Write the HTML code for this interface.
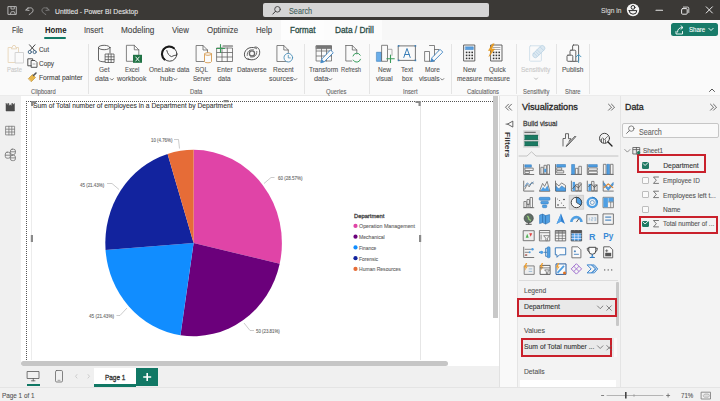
<!DOCTYPE html>
<html><head><meta charset="utf-8">
<style>
*{margin:0;padding:0;box-sizing:border-box}
html,body{width:720px;height:401px;overflow:hidden;background:#fff;font-family:"Liberation Sans",sans-serif;color:#333}
.a{position:absolute}
.t{position:absolute;white-space:nowrap;line-height:1;transform-origin:0 0}
#titlebar{left:0;top:0;width:720px;height:19.5px;background:#3b3936}
#tabs{left:0;top:19.5px;width:720px;height:20.5px;background:#f7f7f7}
#ribbon{left:0;top:40px;width:720px;height:56px;background:#fafafa;border-bottom:1px solid #ebebeb}
#sidebar{left:0;top:96px;width:21px;height:270px;background:#f0f0f0}
#canvas{left:21px;top:96px;width:479px;height:270px;background:#fff}
#pagebar{left:0;top:366px;width:500px;height:21px;background:#f0f0f0}
#status{left:0;top:387px;width:720px;height:14px;background:#f1f1f1;border-top:1px solid #e4e4e4}
#filters{left:499px;top:96px;width:18px;height:291px;background:#f9f9f9;border-left:1px solid #e1e1e1}
#viz{left:517px;top:96px;width:103px;height:291px;background:#f3f3f3;border-left:1px solid #e4e4e4}
#data{left:620px;top:96px;width:100px;height:291px;background:#f3f3f3;border-left:1px solid #e4e4e4}
.sep{position:absolute;top:44px;width:1px;height:49.5px;background:#e4e4e4}
.chk{position:absolute;width:6.5px;height:6.5px;border:1px solid #bdbdbd;background:#fafafa;border-radius:1px}
.chk.on{background:#217a63;border-color:#217a63}
.rbox{position:absolute;border:2px solid #c9202b}
</style></head><body>
<div id="titlebar" class="a"></div>
<div id="tabs" class="a"></div>
<div id="ribbon" class="a"></div>
<div id="sidebar" class="a"></div>
<div id="canvas" class="a"></div>
<div id="pagebar" class="a"></div>
<div id="status" class="a"></div>
<div id="filters" class="a"></div>
<div id="viz" class="a"></div>
<div id="data" class="a"></div>

<!-- search box -->
<div class="a" style="left:263px;top:3px;width:226px;height:14px;background:#d5d5d5;border-radius:2px"></div>
<!-- tab highlights -->
<div class="a" style="left:281px;top:20px;width:43px;height:20px;background:#fdfdfd"></div>
<div class="a" style="left:324px;top:20px;width:58px;height:20px;background:#fcfcfc"></div>
<div class="a" style="left:44.3px;top:36.5px;width:21.8px;height:2.2px;background:#117865;border-radius:1px"></div>
<div class="a" style="left:671.2px;top:22.5px;width:46.6px;height:13.7px;background:#177a68;border-radius:2.5px"></div>
<!-- separators -->
<div class="sep" style="left:88px"></div>
<div class="sep" style="left:303.7px"></div>
<div class="sep" style="left:369px"></div>
<div class="sep" style="left:451px"></div>
<div class="sep" style="left:516px"></div>
<div class="sep" style="left:556.4px"></div>
<div class="sep" style="left:588.6px"></div>

<svg class="a" style="left:0;top:0" width="720" height="40" fill="none" stroke-linejoin="round" stroke-linecap="round">
<path d="M8.3,6.6 h8 v7.8 h-8 z" stroke="#b5b5b5" stroke-width="1"/>
<path d="M11,6.8 v2.2 h3.3 v-2.2" stroke="#b5b5b5" stroke-width="0.9"/>
<path d="M10.3,14.3 l1,-2.6 h3 l1,2.6" stroke="#b5b5b5" stroke-width="0.9"/>
<path d="M26,10 l2.2,-2.6 M26,10 l3,0.4" stroke="#b8b8b8" stroke-width="1"/>
<path d="M26.3,9.8 C29,6.5 33.5,7.5 33,10.8 C32.7,12.3 31,13.5 29.2,14.5" stroke="#b8b8b8" stroke-width="1"/>
<path d="M49,10 l-2.2,-2.6 M49,10 l-3,0.4" stroke="#7d7d7d" stroke-width="1"/>
<path d="M48.7,9.8 C46,6.5 41.5,7.5 42,10.8 C42.3,12.3 44,13.5 45.8,14.5" stroke="#7d7d7d" stroke-width="1"/>
<circle cx="277.5" cy="9.3" r="2.8" stroke="#3d3d3d" stroke-width="0.9"/>
<path d="M275.5,11.3 l-2.7,2.8" stroke="#3d3d3d" stroke-width="1"/>
<circle cx="633" cy="10" r="6.2" fill="#f4f4f4" stroke="none"/>
<circle cx="633" cy="7.4" r="1.9" stroke="#2a2a2a" stroke-width="1"/>
<path d="M629.2,10.6 h7.6 a3.8,3.6 0 0 1 -7.6,0 z" stroke="#2a2a2a" stroke-width="1" fill="#f4f4f4"/>
<path d="M656,10.3 h6.5" stroke="#e8e8e8" stroke-width="1.1"/>
<rect x="681.6" y="8.6" width="5.6" height="5.6" rx="1" stroke="#e8e8e8" stroke-width="1"/>
<path d="M683.4,7.1 h4.2 a1.2,1.2 0 0 1 1.2,1.2 v4.2" stroke="#e8e8e8" stroke-width="0.9"/>
<path d="M706.2,6.8 l6.2,6.2 M712.4,6.8 l-6.2,6.2" stroke="#ececec" stroke-width="1"/>
<path d="M676,31.5 v2.5 h6.5 v-2.5" stroke="#fff" stroke-width="0.9"/>
<path d="M677.5,32 c0,-3 2,-4.5 5,-4.5 M681,25.8 l2,1.7 l-2,1.7" stroke="#fff" stroke-width="0.9"/>
<path d="M708.8,28.3 l2.2,2.2 l2.2,-2.2" stroke="#fff" stroke-width="0.9"/>
</svg>
<!-- ===== RIBBON ICONS ===== -->
<svg class="a" style="left:0;top:0" width="720" height="100" fill="none" stroke-linejoin="round" stroke-linecap="round">
<!-- paste (faded) -->
<path d="M8.5,47.5 h10 v15 h-10 z" stroke="#ead9bf" stroke-width="1"/>
<path d="M11.5,48.5 l1.5,-3 h2 l1.5,3 z" stroke="#e6d3b6" stroke-width="0.9" fill="#fafafa"/>
<path d="M15.5,52.5 h8 v10.5 h-8 z" stroke="#d3d3d3" stroke-width="1" fill="#fafafa"/>
<!-- cut -->
<path d="M29.5,44.8 L34.5,50.5 M35,44.8 L30,50.5" stroke="#444" stroke-width="1"/>
<circle cx="29.8" cy="52" r="1.6" stroke="#4a6d8a" stroke-width="1"/>
<circle cx="34.6" cy="52" r="1.6" stroke="#4a6d8a" stroke-width="1"/>
<!-- copy -->
<path d="M28.2,58.8 h4.5 v7 h-4.5 z" stroke="#444" stroke-width="0.9"/>
<path d="M31.5,60.5 h3.5 l2,2 v4.8 h-5.5 z" stroke="#444" stroke-width="0.9" fill="#fafafa"/>
<path d="M33,64 h2" stroke="#777" stroke-width="0.6"/>
<!-- format painter -->
<path d="M28.5,78.5 l4,-4 l3,3 l-4,4 z" fill="#e8b64a" stroke="#b98a2a" stroke-width="0.6"/>
<path d="M33.5,75.5 l2.5,-2.5" stroke="#555" stroke-width="1.6"/>
<!-- get data -->
<path d="M98.5,47.5 v12.5 a5.5,2 0 0 0 6.5,1.8" stroke="#555" stroke-width="0.9"/>
<path d="M110,47.5 v5.5" stroke="#555" stroke-width="0.9"/>
<ellipse cx="104.2" cy="47.5" rx="5.7" ry="2.2" stroke="#555" stroke-width="0.9"/>
<path d="M105.5,54 h8.5 v8.5 h-8.5 z M105.5,56.8 h8.5 M105.5,59.6 h8.5 M108.3,54 v8.5 M111.1,54 v8.5" stroke="#555" stroke-width="0.8" fill="#fafafa"/>
<!-- excel -->
<path d="M126.8,45.3 h7.5 l4.5,4.5 v11.5 h-12 z" stroke="#666" stroke-width="0.8"/>
<path d="M134.3,45.3 v4.5 h4.5" stroke="#666" stroke-width="0.8"/>
<rect x="133" y="54.8" width="9" height="8" fill="#1f7244" stroke="none"/>
<path d="M135.8,57 l3.4,4 M139.2,57 l-3.4,4" stroke="#fff" stroke-width="0.9"/>
<!-- onelake -->
<circle cx="169.7" cy="54" r="7.2" stroke="#333" stroke-width="0.9"/>
<path d="M164.5,59.5 A7.2,7.2 0 0 1 174,48.2" stroke="#1a1a1a" stroke-width="2"/>
<path d="M166.8,50.5 Q168,55.5 171.5,56.6 Q174,55.2 176.8,55" stroke="#333" stroke-width="0.9"/>
<!-- sql server -->
<path d="M196.5,45.5 h6.5 l4.5,4.5 v11.5 h-11 z" stroke="#666" stroke-width="0.8"/>
<path d="M203,45.5 v4.5 h4.5" stroke="#666" stroke-width="0.8"/>
<path d="M204.5,54 v7.5 a3.5,1.3 0 0 0 7,0 v-7.5" stroke="#d69a4e" stroke-width="0.9" fill="#fafafa"/>
<ellipse cx="208" cy="54" rx="3.5" ry="1.3" stroke="#d69a4e" stroke-width="0.9" fill="#fafafa"/>
<!-- enter data -->
<path d="M217,48 h15.5 v13.5 h-15.5 z M217,52.5 h15.5 M217,57 h15.5 M222,48 v13.5 M227.3,48 v13.5" stroke="#666" stroke-width="0.8"/>
<path d="M223,46 h9.5" stroke="#555" stroke-width="1.2"/>
<path d="M220.5,44.5 v8 M216.5,48.5 h8" stroke="#3a9a5a" stroke-width="1.1"/>
<!-- dataverse -->
<path d="M249.5,59.6 C243,60 242.5,50.5 249,48 C252,47 255,47.5 256.5,48.6" stroke="#555" stroke-width="1"/>
<path d="M255,47 C261,46.5 261.5,56 255.5,59 C252.5,60.3 249.5,60 247.8,58.6" stroke="#555" stroke-width="1"/>
<circle cx="252" cy="53.4" r="2.6" stroke="#666" stroke-width="1.3"/>
<path d="M247.2,55.5 C247,51 250,49.3 253.5,49.8 M256.8,51.4 C257,56 254,57.5 250.5,57" stroke="#666" stroke-width="0.9"/>
<!-- recent sources -->
<path d="M277.3,45.5 h6.5 l4.5,4.5 v11.5 h-11 z" stroke="#666" stroke-width="0.8"/>
<path d="M283.8,45.5 v4.5 h4.5" stroke="#666" stroke-width="0.8"/>
<circle cx="288.3" cy="57.7" r="4.3" stroke="#4a8fb8" stroke-width="0.9" fill="#fafafa"/>
<path d="M288.3,55.3 v2.6 h2" stroke="#4a8fb8" stroke-width="0.8"/>
<!-- transform data -->
<path d="M316.5,45.8 h15 v15.2 h-15 z M316.5,51 h15 M316.5,56 h15 M321.5,48.5 v12.5 M326.5,48.5 v12.5" stroke="#6a6a6a" stroke-width="0.8"/>
<rect x="316.5" y="45.8" width="15" height="2.9" fill="#777" stroke="#6a6a6a" stroke-width="0.6"/>
<path d="M330.8,50.2 L333.3,52.7 L324.2,61.8 L320.8,62.8 L321.8,59.3 Z" fill="#fafafa" stroke="#3f86c4" stroke-width="0.9"/>
<path d="M320.8,62.8 L321.8,59.3 L324.2,61.8 Z" fill="#3f86c4"/>
<!-- refresh -->
<path d="M345.8,45.5 h6.5 l4.5,4.5 v4 M345.8,45.5 v15.5 h6" stroke="#666" stroke-width="0.8"/>
<path d="M352.3,45.5 v4.5 h4.5" stroke="#666" stroke-width="0.8"/>
<path d="M353,56 a4,4 0 0 1 7.3,-0.8 M360.5,59.3 a4,4 0 0 1 -7.3,0.8" stroke="#3aa060" stroke-width="1"/>
<!-- new visual -->
<path d="M376.8,52.3 h4.6 v9 h-4.6 z" fill="#6aaeea" stroke="#3a7fc0" stroke-width="0.7"/>
<path d="M382,45.3 h5.5 v16 h-5.5 z" stroke="#666" stroke-width="0.8"/>
<path d="M387.5,49.3 h4.5 v6" stroke="#999" stroke-width="0.8"/>
<path d="M390.5,55 v7.5 M386.8,58.8 h7.5" stroke="#3a9a5a" stroke-width="1.1"/>
<!-- text box -->
<path d="M398.6,45.9 h16.8 v14.5 h-16.8 z" stroke="#555" stroke-width="0.8"/>
<g fill="#3b7fb8" stroke="none"><rect x="397.8" y="45.1" width="1.6" height="1.6"/><rect x="414.6" y="45.1" width="1.6" height="1.6"/><rect x="397.8" y="59.6" width="1.6" height="1.6"/><rect x="414.6" y="59.6" width="1.6" height="1.6"/></g>
<path d="M403.8,57.5 l3.2,-9 l3.2,9 M404.9,54.5 h4.2" stroke="#3b7fb8" stroke-width="1"/>
<!-- more visuals -->
<path d="M425,51.5 h4.5 v9.8 h-4.5 z M429.5,45.5 h5 v15.8 h-5 M434.5,49.5 h4.5 v3.5" stroke="#666" stroke-width="0.8"/>
<path d="M440.3,49.6 L442.8,52.1 L434.2,60.7 L430.8,61.7 L431.8,58.2 Z" fill="#fafafa" stroke="#3f86c4" stroke-width="0.9"/>
<path d="M430.8,61.7 L431.8,58.2 L434.2,60.7 Z" fill="#3f86c4"/>
<!-- new measure -->
<path d="M464,45 h10.8 v16 h-10.8 z" stroke="#555" stroke-width="0.9"/>
<rect x="465.5" y="46.8" width="7.8" height="2.8" fill="#5aa0e0" stroke="#3a7fc0" stroke-width="0.5"/>
<g fill="#333" stroke="none">
<rect x="465.8" y="51.6" width="1.6" height="1.6"/><rect x="468.6" y="51.6" width="1.6" height="1.6"/><rect x="471.4" y="51.6" width="1.6" height="1.6"/>
<rect x="465.8" y="54.6" width="1.6" height="1.6"/><rect x="468.6" y="54.6" width="1.6" height="1.6"/><rect x="471.4" y="54.6" width="1.6" height="1.6"/>
<rect x="465.8" y="57.6" width="1.6" height="1.6"/><rect x="468.6" y="57.6" width="1.6" height="1.6"/><rect x="471.4" y="57.6" width="1.6" height="1.6"/>
</g>
<!-- quick measure -->
<path d="M491,45 h11 v16 h-11 z" stroke="#555" stroke-width="0.9"/>
<path d="M493,47.5 h7 M493,49.5 h7" stroke="#888" stroke-width="0.7"/>
<g fill="#333" stroke="none">
<rect x="492.8" y="51.6" width="1.6" height="1.6"/><rect x="495.6" y="51.6" width="1.6" height="1.6"/><rect x="498.4" y="51.6" width="1.6" height="1.6"/>
<rect x="492.8" y="54.6" width="1.6" height="1.6"/><rect x="495.6" y="54.6" width="1.6" height="1.6"/><rect x="498.4" y="54.6" width="1.6" height="1.6"/>
<rect x="492.8" y="57.6" width="1.6" height="1.6"/><rect x="495.6" y="57.6" width="1.6" height="1.6"/><rect x="498.4" y="57.6" width="1.6" height="1.6"/>
</g>
<path d="M492.5,44 l-4,6.5 h3 l-2.5,6 l5.5,-7.5 h-3 l2.5,-5 z" fill="#f0a020" stroke="#d88a10" stroke-width="0.5"/>
<!-- sensitivity faded -->
<rect x="529.6" y="45.8" width="11.8" height="15.4" rx="0.8" stroke="#cfdfea" stroke-width="0.9"/>
<g transform="translate(538.8,51.6) rotate(-45)">
<rect x="-7.5" y="-2.6" width="15" height="5.2" rx="2.6" fill="#dbe8f1" stroke="#bcd3e4" stroke-width="0.8"/>
<path d="M-4.5,-2.4 v4.8 M-2.2,-2.4 v4.8 M0.1,-2.4 v4.8 M4.2,-2.4 v4.8" stroke="#bcd3e4" stroke-width="0.7"/>
</g>
<!-- publish -->
<rect x="572.6" y="45" width="6" height="16.3" rx="1" fill="#fafafa" stroke="#555" stroke-width="0.9"/>
<rect x="570" y="50.2" width="5.8" height="11.1" rx="1" fill="#fafafa" stroke="#555" stroke-width="0.9"/>
<rect x="567" y="55.2" width="5.8" height="6.1" rx="1" fill="#fafafa" stroke="#555" stroke-width="0.9"/>
<path d="M578.6,62.5 v-8 M576.2,56.8 l2.4,-2.4 l2.4,2.4" stroke="#3f8fb8" stroke-width="0.9"/>
<!-- collapse caret -->
<path d="M709.5,91.5 l2.5,-2.5 l2.5,2.5" stroke="#444" stroke-width="0.9"/>
<!-- chevrons -->
<path d="M110.3,78.6 l1.5,1.5 l1.5,-1.5 M173.8,78.6 l1.5,1.5 l1.5,-1.5 M293.8,78.6 l1.5,1.5 l1.5,-1.5 M328.8,78.6 l1.5,1.5 l1.5,-1.5 M440.8,78.6 l1.5,1.5 l1.5,-1.5" stroke="#555" stroke-width="0.8"/>
<path d="M534.5,78 l1.5,1.5 l1.5,-1.5" stroke="#aaa" stroke-width="0.8"/>
</svg>

<!-- ===== CANVAS ===== -->
<div class="a" style="left:26px;top:100.5px;width:467px;height:1px;border-top:1px dotted #555"></div>
<div class="a" style="left:26px;top:101px;width:1px;height:259px;border-left:1px dotted #555"></div>
<div class="a" style="left:31px;top:101px;width:1px;height:259px;background:#ececec"></div>
<div class="a" style="left:420px;top:101px;width:1px;height:259px;background:#e6e6e6"></div>
<div class="a" style="left:21px;top:361px;width:427px;height:5px;background:#c6c6c6;border-radius:3px"></div>
<div class="a" style="left:493px;top:96px;width:5px;height:222px;background:#c8c8c8"></div>

<svg class="a" style="left:0;top:0" width="720" height="401">
<path d="M193.6,243.0 L193.60,149.80 A88.3,93.2 0 0 1 279.69,263.74 Z" fill="#E044A7"/>
<path d="M193.6,243.0 L279.69,263.74 A88.3,93.2 0 0 1 180.44,335.16 Z" fill="#6B007B"/>
<path d="M193.6,243.0 L180.44,335.16 A88.3,93.2 0 0 1 105.55,249.96 Z" fill="#118DFF"/>
<path d="M193.6,243.0 L105.55,249.96 A88.3,93.2 0 0 1 167.57,153.94 Z" fill="#12239E"/>
<path d="M193.6,243.0 L167.57,153.94 A88.3,93.2 0 0 1 193.60,149.80 Z" fill="#E66C37"/>
<g fill="none" stroke="#aaa" stroke-width="0.6">
<path d="M174,139.5 L178.5,139.5 L179.5,148.5"/>
<path d="M107,183.5 L112,183.5 L119,189.5"/>
<path d="M264,183.5 L271,177.5 L274.5,177.5"/>
<path d="M116.5,315.5 L120,315.5 L127,308"/>
<path d="M244,323 L250,330.5 L254,330.5"/>
</g>
<circle cx="355.5" cy="225.90" r="2.1" fill="#E044A7"/>
<circle cx="355.5" cy="236.65" r="2.1" fill="#6B007B"/>
<circle cx="355.5" cy="247.40" r="2.1" fill="#118DFF"/>
<circle cx="355.5" cy="258.15" r="2.1" fill="#12239E"/>
<circle cx="355.5" cy="268.90" r="2.1" fill="#E66C37"/>
</svg>

<!-- ===== PAGE BAR ===== -->
<div class="a" style="left:94px;top:368px;width:42px;height:19px;background:#fff;border-bottom:3px solid #117865"></div>
<div class="a" style="left:136px;top:368px;width:22.3px;height:18px;background:#117865"></div>
<div class="a" style="left:27px;top:384px;width:13px;height:1.5px;background:#117865"></div>

<!-- ===== VIZ PANE ===== -->
<div class="a" style="left:522.8px;top:129.8px;width:17.2px;height:18.7px;background:#dedede;border-radius:1px"></div>
<div class="a" style="left:519px;top:280px;width:99px;height:1px;background:#dcdcdc"></div>
<div class="a" style="left:616px;top:282px;width:2.5px;height:44px;background:#c8c8c8;border-radius:1px"></div>
<div class="a" style="left:517px;top:298px;width:99px;height:19px;background:#e9e9e9"></div>
<div class="rbox" style="left:516.6px;top:297.6px;width:100.4px;height:19.7px"></div>
<div class="a" style="left:520.5px;top:338px;width:94px;height:19px;background:#e9e9e9"></div>
<div class="a" style="left:614.4px;top:338px;width:2.6px;height:19px;background:#fafafa"></div>
<div class="rbox" style="left:520.5px;top:337.7px;width:91.3px;height:19.3px"></div>
<div class="a" style="left:520px;top:380px;width:96px;height:7px;background:#fff"></div>

<!-- ===== DATA PANE ===== -->
<div class="a" style="left:622.3px;top:123px;width:96.4px;height:15px;background:#f9f9f9;border:1px solid #c6c6c6;border-radius:2px"></div>
<div class="chk on" style="left:642px;top:162px"></div>
<div class="chk" style="left:642px;top:177px"></div>
<div class="chk" style="left:642px;top:191px"></div>
<div class="chk" style="left:642px;top:206px"></div>
<div class="chk on" style="left:642px;top:220.5px"></div>
<div class="rbox" style="left:637.4px;top:154.4px;width:68.6px;height:18.6px"></div>
<div class="rbox" style="left:639.2px;top:216.3px;width:79.3px;height:17.3px"></div>

<svg class="a" style="left:0;top:0" width="720" height="401" stroke-linejoin="round">
<g transform="translate(522.70,163.30)"><path d="M1,0.8 V11.2 H11.5" stroke="#6b6b6b" stroke-width="0.9" fill="none"/><rect x="2.2" y="1.5" width="6.5" height="2.4" fill="#4f9fe3" stroke="#2c72b5" stroke-width="0.5"/><rect x="2.2" y="4.8" width="8.3" height="2.4" fill="none" stroke="#6b6b6b" stroke-width="0.8"/><rect x="2.2" y="8" width="4.5" height="2.2" fill="none" stroke="#6b6b6b" stroke-width="0.8"/></g>
<g transform="translate(538.60,163.30)"><path d="M1,0.8 V11.2 H11.5" stroke="#6b6b6b" stroke-width="0.9" fill="none"/><rect x="2.3" y="4" width="2.4" height="6.8" fill="none" stroke="#6b6b6b" stroke-width="0.8"/><rect x="5.4" y="2" width="2.4" height="8.8" fill="none" stroke="#6b6b6b" stroke-width="0.8"/><rect x="5.6" y="5.5" width="2" height="3.5" fill="#4f9fe3"/><rect x="8.6" y="1.5" width="2.3" height="9.3" fill="none" stroke="#6b6b6b" stroke-width="0.8"/></g>
<g transform="translate(554.50,163.30)"><path d="M1,0.8 V11.2 H11.5" stroke="#6b6b6b" stroke-width="0.9" fill="none"/><rect x="2.2" y="1.2" width="8.8" height="2.6" fill="#4f9fe3" stroke="#2c72b5" stroke-width="0.5"/><rect x="2.2" y="4.5" width="5" height="2.2" fill="none" stroke="#6b6b6b" stroke-width="0.8"/><rect x="2.2" y="7.4" width="7" height="2.2" fill="none" stroke="#6b6b6b" stroke-width="0.8"/></g>
<g transform="translate(570.40,163.30)"><path d="M0.5,11.2 H11.5" stroke="#6b6b6b" stroke-width="0.9"/><rect x="1.2" y="1.2" width="3" height="9.8" fill="#4f9fe3" stroke="#2c72b5" stroke-width="0.5"/><rect x="5" y="5" width="2.6" height="6" fill="none" stroke="#6b6b6b" stroke-width="0.8"/><rect x="8.4" y="3" width="2.6" height="8" fill="none" stroke="#6b6b6b" stroke-width="0.8"/></g>
<g transform="translate(586.30,163.30)"><path d="M1,0.8 V11.2 H11.5" stroke="#6b6b6b" stroke-width="0.9" fill="none"/><rect x="2.2" y="1.3" width="8.8" height="2.4" fill="#4f9fe3" stroke="#2c72b5" stroke-width="0.5"/><rect x="2.2" y="4.6" width="8.8" height="2.4" fill="none" stroke="#6b6b6b" stroke-width="0.8"/><rect x="2.2" y="7.9" width="8.8" height="2.4" fill="none" stroke="#6b6b6b" stroke-width="0.8"/></g>
<g transform="translate(602.20,163.30)"><path d="M0.5,11.2 H11.5" stroke="#6b6b6b" stroke-width="0.9"/><rect x="1.2" y="1" width="2.6" height="10" fill="none" stroke="#6b6b6b" stroke-width="0.8"/><rect x="4.7" y="1" width="2.6" height="10" fill="#4f9fe3" stroke="#2c72b5" stroke-width="0.5"/><rect x="8.2" y="1" width="2.6" height="10" fill="none" stroke="#6b6b6b" stroke-width="0.8"/></g>
<g transform="translate(522.70,179.90)"><path d="M1,0.8 V11.2 H11.5" stroke="#6b6b6b" stroke-width="0.9" fill="none"/><path d="M2,9.5 L4.5,4.5 L6.5,7 L9,2.5 L11,4" stroke="#6b6b6b" stroke-width="0.8" fill="none"/><path d="M2,7 L4.5,3 L7,5 L9,3.5 L11,2" stroke="#2c72b5" stroke-width="0.7" fill="none"/></g>
<g transform="translate(538.60,179.90)"><path d="M0.5,11.2 H11.5" stroke="#6b6b6b" stroke-width="0.9"/><path d="M1,11 L4,3.5 L6,6.5 L8.5,1.5 L11.2,11 Z" fill="none" stroke="#6b6b6b" stroke-width="0.8"/><path d="M1.6,11 L4.5,7 L6.5,9 L8.8,5.5 L10.8,11 Z" fill="#4f9fe3"/></g>
<g transform="translate(554.50,179.90)"><path d="M1,0.8 V11.2 H11.5" stroke="#6b6b6b" stroke-width="0.9" fill="none"/><path d="M1.5,3.5 L4.5,6 L7,3 L11,5.5 V11 H1.5 Z" fill="none" stroke="#6b6b6b" stroke-width="0.8"/><path d="M1.5,6.5 L4.5,9 L7,6 L11,8.5 V11 H1.5 Z" fill="#4f9fe3" stroke="#2c72b5" stroke-width="0.5"/></g>
<g transform="translate(570.40,179.90)"><path d="M1,0.8 V11.2 H11.5" stroke="#6b6b6b" stroke-width="0.9" fill="none"/><rect x="2.2" y="2" width="2.4" height="9" fill="#4f9fe3"/><rect x="5.3" y="4.5" width="2.4" height="6.5" fill="none" stroke="#6b6b6b" stroke-width="0.8"/><rect x="8.4" y="3" width="2.4" height="8" fill="none" stroke="#6b6b6b" stroke-width="0.8"/><path d="M2,9 L5,5.5 L8,8 L11,4" stroke="#444" stroke-width="0.7" fill="none"/></g>
<g transform="translate(586.30,179.90)"><path d="M1,0.8 V11.2 H11.5" stroke="#6b6b6b" stroke-width="0.9" fill="none"/><rect x="2.2" y="4" width="2.4" height="7" fill="#4f9fe3"/><rect x="5.3" y="1.5" width="2.4" height="9.5" fill="none" stroke="#6b6b6b" stroke-width="0.8"/><rect x="8.4" y="5" width="2.4" height="6" fill="none" stroke="#6b6b6b" stroke-width="0.8"/><path d="M2,7 L5,4 L8,7.5 L11,5" stroke="#444" stroke-width="0.7" fill="none"/></g>
<g transform="translate(602.20,179.90)"><path d="M1,0.8 V11.2 H11.5" stroke="#6b6b6b" stroke-width="0.9" fill="none"/><path d="M1.5,2.5 L6,8 L11,2.5 V5 L6,10.5 L1.5,5 Z" fill="#4f9fe3" stroke="#2c72b5" stroke-width="0.5"/><path d="M1.5,8 L6,4 L11,8" stroke="#d9822b" stroke-width="1.2" fill="none"/></g>
<g transform="translate(522.70,196.50)"><path d="M0.5,11.2 H11.5" stroke="#6b6b6b" stroke-width="0.9"/><rect x="1.2" y="5" width="2.4" height="6" fill="none" stroke="#6b6b6b" stroke-width="0.8"/><rect x="4.3" y="3" width="2.4" height="5" fill="none" stroke="#6b6b6b" stroke-width="0.8"/><rect x="7.4" y="1" width="2.4" height="10" fill="none" stroke="#6b6b6b" stroke-width="0.8"/><rect x="4.5" y="7" width="2" height="4" fill="#6b6b6b" opacity="0.5"/></g>
<g transform="translate(538.60,196.50)"><rect x="0.6" y="0.8" width="10.8" height="3" rx="1" fill="#4f9fe3" stroke="#2c72b5" stroke-width="0.5"/><rect x="2.2" y="4.7" width="7.6" height="2.8" rx="1" fill="#4f9fe3" stroke="#2c72b5" stroke-width="0.5"/><rect x="3.8" y="8.4" width="4.4" height="2.8" rx="1" fill="#4f9fe3" stroke="#2c72b5" stroke-width="0.5"/></g>
<g transform="translate(554.50,196.50)"><path d="M1,0.8 V11.2 H11.5" stroke="#6b6b6b" stroke-width="0.9" fill="none"/><g fill="#333"><circle cx="3.5" cy="8.5" r="0.8"/><circle cx="9.5" cy="3" r="0.8"/></g><g fill="#6b6b6b"><circle cx="5" cy="4" r="0.6"/><circle cx="7" cy="6.5" r="0.6"/><circle cx="9" cy="9" r="0.6"/><circle cx="3" cy="2.5" r="0.5"/></g></g>
<g transform="translate(570.40,196.50)"><rect x="-1.2" y="-1.2" width="14.4" height="14" fill="#dcdcdc" stroke="#bdbdbd" stroke-width="0.6"/><circle cx="6" cy="6" r="5.2" fill="#fafafa" stroke="#333" stroke-width="0.9"/><path d="M6,6 V0.8 A5.2,5.2 0 0 1 10.4,8.8 Z" fill="#4f9fe3" stroke="#333" stroke-width="0.7"/></g>
<g transform="translate(586.30,196.50)"><circle cx="6" cy="6" r="4.6" fill="none" stroke="#4f9fe3" stroke-width="2.4"/><path d="M6,0.8 A5.2,5.2 0 0 1 11.2,6" stroke="#2c72b5" stroke-width="0.8" fill="none"/><circle cx="6" cy="6" r="2" fill="none" stroke="#2c72b5" stroke-width="0.6"/></g>
<g transform="translate(602.20,196.50)"><rect x="0.8" y="0.8" width="10.4" height="10.4" fill="none" stroke="#6b6b6b" stroke-width="0.8"/><rect x="1.2" y="1.2" width="4.5" height="9.6" fill="#4f9fe3"/><rect x="6.2" y="1.2" width="5" height="4" fill="#4f9fe3"/><path d="M6,5.5 H11 M8.5,5.5 V11" stroke="#6b6b6b" stroke-width="0.7"/></g>
<g transform="translate(522.70,213.10)"><circle cx="6" cy="5.2" r="4.6" fill="#5f6f66" stroke="#3a3a3a" stroke-width="0.6"/><path d="M4.5,3 q2,1 1.5,3 q2,0.5 1.5,2" stroke="#9ad07a" stroke-width="1.2" fill="none"/><path d="M3,11.2 H9 M6,9.8 V11.2" stroke="#444" stroke-width="0.9"/></g>
<g transform="translate(538.60,213.10)"><path d="M1,2 L4,1 L7,2.5 L11,1.5 V9 L7,11 L4,9.5 L1,10.5 Z" fill="#4f9fe3" stroke="#2c72b5" stroke-width="0.6"/><path d="M4,1 V9.5 M7,2.5 V11" stroke="#2a5f96" stroke-width="0.6"/></g>
<g transform="translate(554.50,213.10)"><path d="M6.5,0.5 L10.5,11 L6.5,8.5 L2,11 Z" fill="#2f7fd0"/><path d="M6.5,0.5 L6.5,8.5 L2,11 Z" fill="#5aa6ea"/></g>
<g transform="translate(570.40,213.10)"><path d="M1,9 A5,5 0 0 1 11,9" stroke="#4f9fe3" stroke-width="2.6" fill="none"/><path d="M6,9 L8.5,5.5" stroke="#333" stroke-width="0.8"/></g>
<g transform="translate(586.30,213.10)"><rect x="0.5" y="1.5" width="11" height="9" fill="#eee" stroke="#6b6b6b" stroke-width="0.9"/><path d="M3,4.5 V7.5 M5,4.5 H6.5 V6 H5 V7.5 H6.5 M8,4.5 H9.5 V7.5 H8 M8,6 H9.5" stroke="#8ab0d0" stroke-width="0.6" fill="none"/></g>
<g transform="translate(602.20,213.10)"><rect x="0.8" y="0.8" width="10.4" height="10.4" fill="none" stroke="#6b6b6b" stroke-width="0.9"/><path d="M3,4 H9 M3,7 H9" stroke="#2c72b5" stroke-width="1"/></g>
<g transform="translate(522.70,229.70)"><rect x="0.5" y="1" width="11" height="10" fill="#eee" stroke="#6b6b6b" stroke-width="0.9"/><path d="M3,8 L4.5,4 L6,8 Z" fill="#4caf50"/><path d="M6.5,3.5 H9.5 L8,7 Z" fill="#e04040"/></g>
<g transform="translate(538.60,229.70)"><rect x="0.8" y="0.8" width="10.4" height="10.4" fill="none" stroke="#6b6b6b" stroke-width="0.9"/><path d="M0.8,3 H11.2" stroke="#6b6b6b" stroke-width="0.8"/><path d="M5,6 H11 L8.8,8.5 V11 H7.2 V8.5 Z" fill="#fafafa" stroke="#6b6b6b" stroke-width="0.8"/><path d="M2.5,5 V10" stroke="#6b6b6b" stroke-width="0.8"/></g>
<g transform="translate(554.50,229.70)"><rect x="0.8" y="0.8" width="10.4" height="10.4" fill="none" stroke="#6b6b6b" stroke-width="0.9"/><path d="M0.8,3.5 H11.2 M0.8,6.2 H11.2 M0.8,8.8 H11.2 M4.2,0.8 V11.2 M7.8,0.8 V11.2" stroke="#6b6b6b" stroke-width="0.7"/><rect x="0.8" y="0.8" width="10.4" height="2.7" fill="#6b6b6b" opacity="0.6"/></g>
<g transform="translate(570.40,229.70)"><rect x="0.8" y="0.8" width="10.4" height="10.4" fill="#4f9fe3" stroke="#555" stroke-width="0.9"/><path d="M0.8,3.5 H11.2 M0.8,6.2 H11.2 M0.8,8.8 H11.2 M4.2,0.8 V11.2 M7.8,0.8 V11.2" stroke="#eef" stroke-width="0.7"/><rect x="0.8" y="0.8" width="10.4" height="2.7" fill="#555"/></g>
<g transform="translate(586.30,229.70)"><text x="6" y="10" font-family="Liberation Sans" font-weight="bold" font-size="9" fill="#3a8ad6" text-anchor="middle">R</text></g>
<g transform="translate(602.20,229.70)"><text x="6" y="9.5" font-family="Liberation Sans" font-weight="bold" font-size="9" fill="#3a8ad6" text-anchor="middle" transform="translate(6,0) scale(0.92,1) translate(-6,0)">Py</text></g>
<g transform="translate(522.70,246.30)"><path d="M1,0.5 V11.2 H11.5" stroke="#6b6b6b" stroke-width="0.9" fill="none"/><path d="M2,3 H9 M2,6 H6.5 M2,9 H4.5" stroke="#6b6b6b" stroke-width="0.8"/><circle cx="9.8" cy="3" r="1.2" fill="#4f9fe3"/><circle cx="7" cy="6" r="1" fill="#4f9fe3"/><path d="M2.5,8.5 h2" stroke="#c0392b" stroke-width="0.8"/></g>
<g transform="translate(538.60,246.30)"><path d="M0.5,6 H4" stroke="#2c72b5" stroke-width="1.3"/><circle cx="3" cy="6" r="1.6" fill="#4f9fe3"/><path d="M5,6 H7 M7,2 V10 M7,2 H9 M7,10 H9 M7,6 H9" stroke="#2c72b5" stroke-width="0.8" fill="none"/><rect x="8.5" y="0.5" width="3" height="11" rx="1.2" fill="#4f9fe3" stroke="#2c72b5" stroke-width="0.5"/></g>
<g transform="translate(554.50,246.30)"><path d="M0.8,1.5 H11.2 V8.5 H5 L2.5,11 V8.5 H0.8 Z" fill="#fafafa" stroke="#2c72b5" stroke-width="0.9"/></g>
<g transform="translate(570.40,246.30)"><path d="M1.5,0.5 H7.5 L10.5,3.5 V11.5 H1.5 Z" fill="#fafafa" stroke="#6b6b6b" stroke-width="0.9"/><path d="M3.5,5 h2 M4.5,4 v2 M3.5,8 H8.5" stroke="#2c72b5" stroke-width="0.8"/></g>
<g transform="translate(586.30,246.30)"><path d="M2.5,1 H9.5 V4.5 A3.5,3.5 0 0 1 2.5,4.5 Z" fill="#fafafa" stroke="#333" stroke-width="0.9"/><path d="M2.5,2 H0.8 Q0.8,5 3,5.5 M9.5,2 H11.2 Q11.2,5 9,5.5" stroke="#333" stroke-width="0.7" fill="none"/><path d="M6,8 V10 M3.5,11.2 H8.5" stroke="#2c72b5" stroke-width="1.2"/><path d="M4,11 L6,9.5 L8,11 Z" fill="#4f9fe3"/></g>
<g transform="translate(602.20,246.30)"><path d="M1.5,0.5 H7.5 L10.5,3.5 V11.5 H1.5 Z" fill="#fafafa" stroke="#555" stroke-width="0.9"/><rect x="3" y="6.5" width="6" height="3.5" fill="#555"/><path d="M4.5,3 v3 M3,4.5 h3" stroke="#555" stroke-width="0.8"/></g>
<g transform="translate(522.70,262.90)"><rect x="1.5" y="3" width="10" height="8.5" fill="#eee" stroke="#6b6b6b" stroke-width="0.8"/><path d="M3.2,0.2 L1,4.5 H3 L1.8,8 L5,3.5 H3.2 L4.5,0.2 Z" fill="#f0a030"/><path d="M6,6 H9.5 M6,8.5 H9.5" stroke="#8ab0d0" stroke-width="0.8"/></g>
<g transform="translate(538.60,262.90)"><rect x="1.5" y="2.5" width="10" height="9" fill="#fafafa" stroke="#555" stroke-width="0.9"/><path d="M3.2,0.2 L1,4.5 H3 L1.8,8 L5,3.5 H3.2 L4.5,0.2 Z" fill="#f0a030"/><path d="M6,7 H11 L9.2,9 V11 H7.8 V9 Z" fill="#fafafa" stroke="#555" stroke-width="0.7"/><path d="M1.5,5 H11.5" stroke="#555" stroke-width="0.7"/></g>
<g transform="translate(554.50,262.90)"><rect x="1.5" y="1" width="10" height="10.5" fill="#fafafa" stroke="#2c5f9e" stroke-width="1"/><path d="M3,10 L9.5,3" stroke="#4f9fe3" stroke-width="1.8"/><path d="M3.5,0 L1.2,4.5 H3.2 L2,8 L5.2,3.5 H3.4 L4.8,0 Z" fill="#f0a030"/><circle cx="10" cy="10" r="1.5" fill="#e07020"/></g>
<g transform="translate(570.40,262.90)"><path d="M6,0.8 L11.2,6 L6,11.2 L0.8,6 Z" fill="none" stroke="#a070d0" stroke-width="1"/><path d="M3.4,3.4 L8.6,8.6 M8.6,3.4 L3.4,8.6" stroke="#a070d0" stroke-width="0.9"/></g>
<g transform="translate(586.30,262.90)"><path d="M0.8,2 H6 L10,6 L6,10 H0.8 L4.8,6 Z" fill="none" stroke="#3a86d0" stroke-width="1"/><path d="M5,2 L9,6 L5,10" stroke="#3a86d0" stroke-width="0.9" fill="none"/><path d="M6,2 H8 L11.5,6 L8,10 H6" stroke="#3a86d0" stroke-width="0.9" fill="none"/></g>
<g transform="translate(602.20,262.90)"><g fill="#555"><circle cx="2.5" cy="7" r="0.7"/><circle cx="6" cy="7" r="0.7"/><circle cx="9.5" cy="7" r="0.7"/></g></g>
</svg>
<svg class="a" style="left:0;top:0" width="720" height="401" fill="none" stroke-linejoin="round" stroke-linecap="round">
<!-- sidebar: report -->
<path d="M6,103.5 v7.5 h8.5 v-7.5 l-1.6,1.6 v-1.6 h-1.2 v2.6 l-1.4,-1.4 l-1.4,1.4 v-2.6 h-1.2 v1.6 z" fill="#4a4a4a" stroke="#4a4a4a" stroke-width="0.5"/>
<!-- sidebar: table -->
<path d="M6,126.3 h8.6 v8.6 h-8.6 z M6,129.2 h8.6 M6,132 h8.6 M8.9,126.3 v8.6 M11.8,126.3 v8.6" stroke="#7a7a7a" stroke-width="0.8"/>
<!-- sidebar: model -->
<g stroke="#7d7d7d" stroke-width="0.9">
<rect x="5.3" y="152.2" width="5" height="6" rx="1.8"/><path d="M5.3,155.2 h5"/>
<rect x="10.4" y="149.2" width="5" height="5.3" rx="1.8"/><path d="M10.4,151.8 h5"/>
<rect x="10.4" y="155.3" width="5" height="5.3" rx="1.8"/><path d="M10.4,157.9 h5"/>
</g>
<!-- canvas handles -->
<g fill="#8a8a8a">
<rect x="31" y="101" width="2.2" height="5"/><rect x="31" y="101" width="5" height="2"/>
<rect x="223.5" y="100" width="5" height="2.2"/>
<rect x="418.5" y="101" width="2.2" height="5"/><rect x="415.5" y="101" width="5" height="2"/>
<rect x="30.8" y="235" width="2.2" height="7"/>
<rect x="419" y="235" width="2.2" height="7"/>
</g>
<!-- filters pane -->
<path d="M508.5,104.2 l-3,3 l3,3 M511.5,104.2 l-3,3 l3,3" stroke="#444" stroke-width="0.8"/>
<path d="M512.5,121.3 l-5,2.8 l5,2.8 z M507.5,124.1 h-1.5" stroke="#444" stroke-width="0.8"/>
<!-- viz pane -->
<path d="M608.5,104.2 l3,3 l-3,3 M611.5,104.2 l3,3 l-3,3" stroke="#444" stroke-width="0.8"/>
<path d="M524.8,132.3 h10.5" stroke="#444" stroke-width="0.9"/>
<rect x="524.5" y="135" width="13.5" height="4.9" fill="#1a7a62"/>
<rect x="524.5" y="141.5" width="13.5" height="4.5" fill="#1a7a62"/>
<path d="M524.5,135.2 h13.5 M524.5,139.7 h13.5 M524.5,141.7 h13.5 M524.5,145.8 h13.5" stroke="#235a4b" stroke-width="0.5" stroke-dasharray="1,0.6"/>
<path d="M563,146 v-7.5 h2.5 v-4.8 h3 v5 h2.5 l-2,2.5" stroke="#444" stroke-width="0.8"/>
<path d="M575.5,137 l-7.5,8 l-1.8,1.5 l1.2,-2.2 l7.5,-8 z" stroke="#333" stroke-width="0.8" fill="#fafafa"/>
<circle cx="604.5" cy="138.3" r="5" stroke="#333" stroke-width="0.9"/>
<path d="M608,142 l4,4" stroke="#222" stroke-width="1.3"/>
<path d="M600.5,140 l2,-2 l2,1.5 l3,-3 M601.5,139.5 v3 M603.5,139 v3.8 M605.5,140 v3" stroke="#444" stroke-width="0.7"/>
<path d="M519,156 h8 l4.5,-4.2 l4.5,4.2 h82" stroke="#bdbdbd" stroke-width="0.9"/>
<!-- field well chevrons / x -->
<path d="M597.5,306 l2.7,2.7 l2.7,-2.7 M606.8,305.8 l4.5,4.5 M611.3,305.8 l-4.5,4.5" stroke="#666" stroke-width="0.8"/>
<path d="M597.5,345.8 l2.7,2.7 l2.7,-2.7 M606.8,345.5 l4.5,4.5 M611.3,345.5 l-4.5,4.5" stroke="#666" stroke-width="0.8"/>
<!-- data pane -->
<path d="M710.5,104.2 l3,3 l-3,3 M713.5,104.2 l3,3 l-3,3" stroke="#444" stroke-width="0.8"/>
<circle cx="631.3" cy="128.6" r="2.7" stroke="#666" stroke-width="0.8"/>
<path d="M629.4,130.6 l-2.8,2.8" stroke="#666" stroke-width="0.9"/>
<path d="M624.8,149.5 l2.6,2.6 l2.6,-2.6" stroke="#777" stroke-width="0.8"/>
<path d="M633.2,147.5 h6.5 v6.5 h-6.5 z M633.2,149.6 h6.5 M636.4,147.5 v6.5" stroke="#555" stroke-width="0.8" fill="#eee"/>
<circle cx="638.6" cy="152.6" r="1.6" fill="#1e7a5f"/>
<path d="M643.3,163.7 l1.8,1.8 l3,-3" stroke="#fff" stroke-width="0.9"/>
<path d="M643.3,222.2 l1.8,1.8 l3,-3" stroke="#fff" stroke-width="0.9"/>
<g stroke="#444" stroke-width="0.7">
<path d="M658.5,177 h-5 l2.8,3.2 l-2.8,3.2 h5"/>
<path d="M658.5,191.2 h-5 l2.8,3.2 l-2.8,3.2 h5"/>
<path d="M658.5,220.5 h-5 l2.8,3.2 l-2.8,3.2 h5"/>
</g>
<!-- page bar -->
<path d="M27.5,371.5 h11.5 v7 h-11.5 z M31.5,380.8 h3.5 M33.25,378.5 v2.3" stroke="#555" stroke-width="0.8"/>
<rect x="55.5" y="370.5" width="7" height="11.5" rx="1.2" stroke="#666" stroke-width="0.8"/>
<path d="M58,380.3 h2" stroke="#666" stroke-width="0.6"/>
<path d="M77,374.5 l-1.5,1.8 l1.5,1.8 M88,374.5 l1.5,1.8 l-1.5,1.8" stroke="#c4c4c4" stroke-width="0.8"/>
<path d="M147.2,373 v8 M143.2,377 h8" stroke="#fff" stroke-width="1.6" stroke-linecap="butt"/>
<!-- status zoom -->
<path d="M601.5,395.5 h2.2 M666.5,395.5 h3.2 M668.1,393.9 v3.2" stroke="#666" stroke-width="0.8"/>
<path d="M607,395.5 h56" stroke="#9a9a9a" stroke-width="0.7"/>
<path d="M634,394.5 v2" stroke="#888" stroke-width="0.6"/>
<rect x="625" y="392" width="1.6" height="6.5" fill="#444" stroke="none"/>
<rect x="701.5" y="392.2" width="9" height="6.8" stroke="#777" stroke-width="0.8"/>
<path d="M703.2,395.6 l1.5,-1.6 h3.6 l1.5,1.6 l-1.5,1.6 h-3.6 z" stroke="#999" stroke-width="0.6" fill="#ddd"/>
</svg>

<div class="t" style="left:511.4px;top:132.3px;font-size:8px;font-weight:bold;color:#333;transform:rotate(90deg) scaleX(1.06)">Filters</div>
<div class="t" style="left:54.70px;top:8.00px;font-size:7.3px;-webkit-text-stroke:0.1px #e6e6e6;color:#e6e6e6;transform:scaleX(0.927);">Untitled - Power BI Desktop</div>
<div class="t" style="left:288.75px;top:8.00px;font-size:8.2px;-webkit-text-stroke:0.1px #3f605b;color:#3f605b;transform:scaleX(0.892);">Search</div>
<div class="t" style="left:601.00px;top:7.00px;font-size:7.0px;-webkit-text-stroke:0.1px #dcdcdc;color:#dcdcdc;transform:scaleX(0.953);">Sign in</div>
<div class="t" style="left:11.70px;top:27.00px;font-size:8.2px;-webkit-text-stroke:0.1px #444;color:#444;transform:scaleX(0.841);">File</div>
<div class="t" style="left:44.50px;top:27.00px;font-size:8.2px;font-weight:bold;color:#222;transform:scaleX(0.945);">Home</div>
<div class="t" style="left:83.50px;top:27.00px;font-size:8.2px;-webkit-text-stroke:0.1px #444;color:#444;transform:scaleX(0.928);">Insert</div>
<div class="t" style="left:121.00px;top:27.00px;font-size:8.2px;-webkit-text-stroke:0.1px #444;color:#444;transform:scaleX(1.005);">Modeling</div>
<div class="t" style="left:172.00px;top:27.00px;font-size:8.2px;-webkit-text-stroke:0.1px #444;color:#444;transform:scaleX(0.954);">View</div>
<div class="t" style="left:206.70px;top:27.00px;font-size:8.2px;-webkit-text-stroke:0.1px #444;color:#444;transform:scaleX(0.962);">Optimize</div>
<div class="t" style="left:256.00px;top:27.00px;font-size:8.2px;-webkit-text-stroke:0.1px #444;color:#444;transform:scaleX(0.950);">Help</div>
<div class="t" style="left:289.60px;top:27.00px;font-size:8.2px;-webkit-text-stroke:0.28px #2b4d47;color:#2b4d47;transform:scaleX(0.979);">Format</div>
<div class="t" style="left:334.70px;top:27.00px;font-size:8.2px;-webkit-text-stroke:0.28px #2b4d47;color:#2b4d47;transform:scaleX(1.015);">Data / Drill</div>
<div class="t" style="left:689.00px;top:26.00px;font-size:7.0px;-webkit-text-stroke:0.1px #ffffff;color:#ffffff;transform:scaleX(0.867);">Share</div>
<div class="t" style="left:6.70px;top:66.00px;font-size:7.0px;-webkit-text-stroke:0.1px #c8c8c8;color:#c8c8c8;transform:scaleX(0.832);">Paste</div>
<div class="t" style="left:39.20px;top:46.00px;font-size:7.0px;-webkit-text-stroke:0.1px #444;color:#444;transform:scaleX(0.908);">Cut</div>
<div class="t" style="left:39.20px;top:60.00px;font-size:7.0px;-webkit-text-stroke:0.1px #444;color:#444;transform:scaleX(0.918);">Copy</div>
<div class="t" style="left:39.20px;top:74.00px;font-size:7.0px;-webkit-text-stroke:0.1px #444;color:#444;transform:scaleX(0.958);">Format painter</div>
<div class="t" style="left:31.10px;top:89.00px;font-size:6.3px;-webkit-text-stroke:0.1px #666;color:#666;transform:scaleX(0.913);">Clipboard</div>
<div class="t" style="left:99.25px;top:66.00px;font-size:7.0px;-webkit-text-stroke:0.1px #555;color:#555;transform:scaleX(0.930);">Get</div>
<div class="t" style="left:95.20px;top:75.00px;font-size:7.0px;-webkit-text-stroke:0.1px #555;color:#555;transform:scaleX(1.013);">data</div>
<div class="t" style="left:124.90px;top:66.00px;font-size:7.0px;-webkit-text-stroke:0.1px #555;color:#555;transform:scaleX(0.841);">Excel</div>
<div class="t" style="left:117.40px;top:75.00px;font-size:7.0px;-webkit-text-stroke:0.1px #555;color:#555;transform:scaleX(0.978);">workbook</div>
<div class="t" style="left:148.60px;top:66.00px;font-size:7.0px;-webkit-text-stroke:0.1px #555;color:#555;transform:scaleX(0.919);">OneLake data</div>
<div class="t" style="left:159.90px;top:75.00px;font-size:7.0px;-webkit-text-stroke:0.1px #555;color:#555;transform:scaleX(1.087);">hub</div>
<div class="t" style="left:195.48px;top:66.00px;font-size:7.0px;-webkit-text-stroke:0.1px #555;color:#555;transform:scaleX(0.930);">SQL</div>
<div class="t" style="left:193.00px;top:75.00px;font-size:7.0px;-webkit-text-stroke:0.1px #555;color:#555;transform:scaleX(0.873);">Server</div>
<div class="t" style="left:216.82px;top:66.00px;font-size:7.0px;-webkit-text-stroke:0.1px #555;color:#555;transform:scaleX(0.930);">Enter</div>
<div class="t" style="left:218.26px;top:75.00px;font-size:7.0px;-webkit-text-stroke:0.1px #555;color:#555;transform:scaleX(0.930);">data</div>
<div class="t" style="left:237.00px;top:66.00px;font-size:7.0px;-webkit-text-stroke:0.1px #555;color:#555;transform:scaleX(0.925);">Dataverse</div>
<div class="t" style="left:272.68px;top:66.00px;font-size:7.0px;-webkit-text-stroke:0.1px #555;color:#555;transform:scaleX(0.930);">Recent</div>
<div class="t" style="left:268.70px;top:75.00px;font-size:7.0px;-webkit-text-stroke:0.1px #555;color:#555;transform:scaleX(0.991);">sources</div>
<div class="t" style="left:189.51px;top:89.00px;font-size:6.3px;-webkit-text-stroke:0.1px #666;color:#666;transform:scaleX(0.930);">Data</div>
<div class="t" style="left:309.40px;top:66.00px;font-size:7.0px;-webkit-text-stroke:0.1px #555;color:#555;transform:scaleX(0.923);">Transform</div>
<div class="t" style="left:313.90px;top:75.00px;font-size:7.0px;-webkit-text-stroke:0.1px #555;color:#555;transform:scaleX(1.042);">data</div>
<div class="t" style="left:341.00px;top:66.00px;font-size:7.0px;-webkit-text-stroke:0.1px #555;color:#555;transform:scaleX(0.816);">Refresh</div>
<div class="t" style="left:325.74px;top:89.00px;font-size:6.3px;-webkit-text-stroke:0.1px #666;color:#666;transform:scaleX(0.930);">Queries</div>
<div class="t" style="left:378.08px;top:66.00px;font-size:7.0px;-webkit-text-stroke:0.1px #555;color:#555;transform:scaleX(0.930);">New</div>
<div class="t" style="left:376.27px;top:75.00px;font-size:7.0px;-webkit-text-stroke:0.1px #555;color:#555;transform:scaleX(0.930);">visual</div>
<div class="t" style="left:401.03px;top:66.00px;font-size:7.0px;-webkit-text-stroke:0.1px #555;color:#555;transform:scaleX(0.930);">Text</div>
<div class="t" style="left:401.75px;top:75.00px;font-size:7.0px;-webkit-text-stroke:0.1px #555;color:#555;transform:scaleX(0.930);">box</div>
<div class="t" style="left:425.08px;top:66.00px;font-size:7.0px;-webkit-text-stroke:0.1px #555;color:#555;transform:scaleX(0.930);">More</div>
<div class="t" style="left:419.40px;top:75.00px;font-size:7.0px;-webkit-text-stroke:0.1px #555;color:#555;transform:scaleX(0.962);">visuals</div>
<div class="t" style="left:402.68px;top:89.00px;font-size:6.3px;-webkit-text-stroke:0.1px #666;color:#666;transform:scaleX(0.930);">Insert</div>
<div class="t" style="left:463.18px;top:66.00px;font-size:7.0px;-webkit-text-stroke:0.1px #555;color:#555;transform:scaleX(0.930);">New</div>
<div class="t" style="left:457.00px;top:75.00px;font-size:7.0px;-webkit-text-stroke:0.1px #555;color:#555;transform:scaleX(0.918);">measure</div>
<div class="t" style="left:488.67px;top:66.00px;font-size:7.0px;-webkit-text-stroke:0.1px #555;color:#555;transform:scaleX(0.930);">Quick</div>
<div class="t" style="left:484.00px;top:75.00px;font-size:7.0px;-webkit-text-stroke:0.1px #555;color:#555;transform:scaleX(0.955);">measure</div>
<div class="t" style="left:467.04px;top:89.00px;font-size:6.3px;-webkit-text-stroke:0.1px #666;color:#666;transform:scaleX(0.930);">Calculations</div>
<div class="t" style="left:521.35px;top:66.00px;font-size:7.0px;-webkit-text-stroke:0.1px #c8c8c8;color:#c8c8c8;transform:scaleX(0.930);">Sensitivity</div>
<div class="t" style="left:522.81px;top:89.00px;font-size:6.3px;-webkit-text-stroke:0.1px #666;color:#666;transform:scaleX(0.930);">Sensitivity</div>
<div class="t" style="left:562.32px;top:66.00px;font-size:7.0px;-webkit-text-stroke:0.1px #555;color:#555;transform:scaleX(0.930);">Publish</div>
<div class="t" style="left:565.18px;top:89.00px;font-size:6.3px;-webkit-text-stroke:0.1px #666;color:#666;transform:scaleX(0.930);">Share</div>
<div class="t" style="left:33.00px;top:103.00px;font-size:6.5px;-webkit-text-stroke:0.1px #3a3a3a;color:#3a3a3a;transform:scaleX(1.035);">Sum of Total number of employees in a Department by Department</div>
<div class="t" style="left:150.60px;top:139.00px;font-size:4.7px;-webkit-text-stroke:0.1px #6a6a6a;color:#6a6a6a;transform:scaleX(0.933);">10 (4.76%)</div>
<div class="t" style="left:80.00px;top:184.00px;font-size:4.7px;-webkit-text-stroke:0.1px #6a6a6a;color:#6a6a6a;transform:scaleX(0.947);">45 (21.43%)</div>
<div class="t" style="left:277.50px;top:177.00px;font-size:4.7px;-webkit-text-stroke:0.1px #6a6a6a;color:#6a6a6a;transform:scaleX(0.959);">60 (28.57%)</div>
<div class="t" style="left:89.00px;top:315.00px;font-size:4.7px;-webkit-text-stroke:0.1px #6a6a6a;color:#6a6a6a;transform:scaleX(0.979);">45 (21.43%)</div>
<div class="t" style="left:256.00px;top:330.00px;font-size:4.7px;-webkit-text-stroke:0.1px #6a6a6a;color:#6a6a6a;transform:scaleX(0.932);">50 (23.81%)</div>
<div class="t" style="left:353.70px;top:214.00px;font-size:5.4px;-webkit-text-stroke:0.28px #444;color:#444;transform:scaleX(1.076);">Department</div>
<div class="t" style="left:358.90px;top:224.00px;font-size:5.4px;-webkit-text-stroke:0.1px #666;color:#666;transform:scaleX(0.990);">Operation Management</div>
<div class="t" style="left:358.90px;top:235.00px;font-size:5.4px;-webkit-text-stroke:0.1px #666;color:#666;transform:scaleX(0.942);">Mechanical</div>
<div class="t" style="left:358.90px;top:246.00px;font-size:5.4px;-webkit-text-stroke:0.1px #666;color:#666;transform:scaleX(0.902);">Finance</div>
<div class="t" style="left:358.90px;top:257.00px;font-size:5.4px;-webkit-text-stroke:0.1px #666;color:#666;transform:scaleX(0.924);">Forensic</div>
<div class="t" style="left:358.90px;top:267.00px;font-size:5.4px;-webkit-text-stroke:0.1px #666;color:#666;transform:scaleX(0.936);">Human Resources</div>
<div class="t" style="left:104.60px;top:375.00px;font-size:6.7px;-webkit-text-stroke:0.28px #333;color:#333;transform:scaleX(0.962);">Page 1</div>
<div class="t" style="left:1.50px;top:393.00px;font-size:6.5px;-webkit-text-stroke:0.1px #555;color:#555;transform:scaleX(0.977);">Page 1 of 1</div>
<div class="t" style="left:681.00px;top:393.00px;font-size:6.5px;-webkit-text-stroke:0.1px #555;color:#555;transform:scaleX(0.945);">71%</div>
<div class="t" style="left:522.30px;top:103.00px;font-size:8.4px;-webkit-text-stroke:0.28px #252423;color:#252423;transform:scaleX(1.095);">Visualizations</div>
<div class="t" style="left:522.50px;top:120.00px;font-size:7.0px;-webkit-text-stroke:0.28px #444;color:#444;transform:scaleX(0.968);">Build visual</div>
<div class="t" style="left:524.40px;top:288.00px;font-size:6.8px;-webkit-text-stroke:0.1px #555;color:#555;transform:scaleX(0.974);">Legend</div>
<div class="t" style="left:524.40px;top:304.00px;font-size:6.8px;-webkit-text-stroke:0.1px #333;color:#333;transform:scaleX(1.011);">Department</div>
<div class="t" style="left:524.40px;top:328.00px;font-size:6.8px;-webkit-text-stroke:0.1px #555;color:#555;transform:scaleX(1.040);">Values</div>
<div class="t" style="left:524.00px;top:344.00px;font-size:6.8px;-webkit-text-stroke:0.1px #333;color:#333;transform:scaleX(1.003);">Sum of Total number ...</div>
<div class="t" style="left:524.40px;top:369.00px;font-size:6.8px;-webkit-text-stroke:0.1px #555;color:#555;transform:scaleX(0.991);">Details</div>
<div class="t" style="left:624.70px;top:103.00px;font-size:9.0px;-webkit-text-stroke:0.28px #252423;color:#252423;transform:scaleX(0.983);">Data</div>
<div class="t" style="left:638.60px;top:129.00px;font-size:8.2px;-webkit-text-stroke:0.1px #666;color:#666;transform:scaleX(0.879);">Search</div>
<div class="t" style="left:643.00px;top:148.00px;font-size:6.8px;-webkit-text-stroke:0.1px #555;color:#555;transform:scaleX(0.928);">Sheet1</div>
<div class="t" style="left:663.20px;top:163.00px;font-size:6.8px;-webkit-text-stroke:0.1px #333;color:#333;transform:scaleX(1.000);">Department</div>
<div class="t" style="left:663.20px;top:178.00px;font-size:6.8px;-webkit-text-stroke:0.1px #555;color:#555;transform:scaleX(0.945);">Employee ID</div>
<div class="t" style="left:663.20px;top:193.00px;font-size:6.8px;-webkit-text-stroke:0.1px #555;color:#555;transform:scaleX(0.977);">Employees left t...</div>
<div class="t" style="left:663.20px;top:207.00px;font-size:6.8px;-webkit-text-stroke:0.1px #555;color:#555;transform:scaleX(0.965);">Name</div>
<div class="t" style="left:663.20px;top:221.00px;font-size:6.8px;-webkit-text-stroke:0.1px #555;color:#555;transform:scaleX(0.941);">Total number of ...</div>
</body></html>
